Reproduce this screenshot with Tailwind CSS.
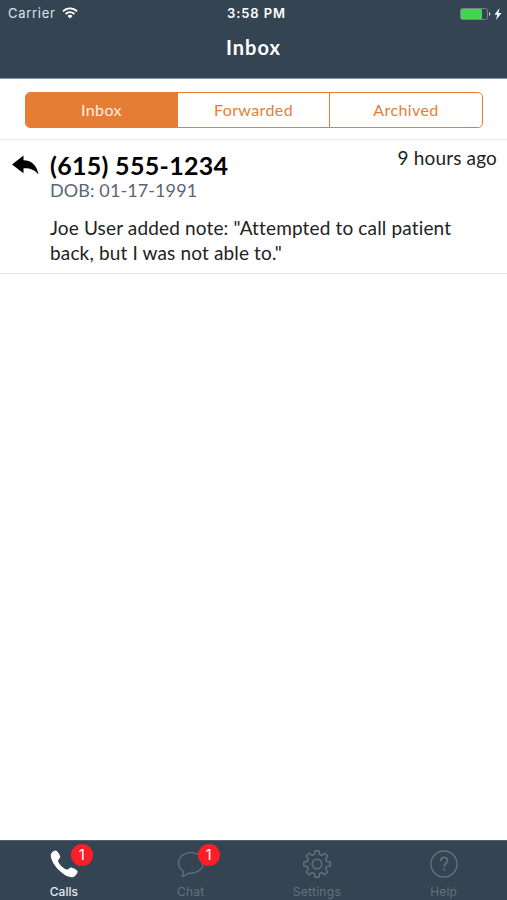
<!DOCTYPE html>
<html lang="en">
<head>
    <meta charset="UTF-8">
    <meta name="viewport" content="width=device-width, initial-scale=1.0">
    <title>Inbox</title>
    <script src="https://cdn.jsdelivr.net/npm/@tailwindcss/browser@4"></script>
</head>
<body class="bg-white font-['Lato',sans-serif]">
    <div class="flex flex-col h-[900px] w-[507px] overflow-hidden">

        <!-- Status bar and title -->
        <header class="h-[79px] shrink-0 bg-[#354453] border-b border-[#8296ab] text-white">
            <div class="grid grid-cols-3 items-center h-7 pl-2 pr-[5px] font-['Inter',sans-serif] text-[13px]">
                <div class="flex items-center gap-1.5 text-[#dde5ec]">
                    <span class="tracking-[0.7px]">Carrier</span>
                    <svg class="w-4 h-3 -mt-0.5" viewBox="0 0 16 12" fill="none" stroke="#fff" stroke-width="1.8">
                        <path d="M1 4.3a10 10 0 0 1 14 0M3.6 7a6.3 6.3 0 0 1 8.8 0"/>
                        <path d="M8 11.5 5.5 9a3.6 3.6 0 0 1 5 0z" fill="#fff" stroke="none"/>
                    </svg>
                </div>
                <div class="pl-[3px] text-center font-semibold tracking-[0.9px]">3:58 PM</div>
                <div class="flex items-center justify-end gap-[3px]">
                    <svg class="w-[31px] h-3" viewBox="0 0 31 12">
                        <rect x=".5" y=".5" width="27" height="11" rx="2" fill="none" stroke="#77838c"/>
                        <rect x="1" y="1" width="21" height="10" rx="1" fill="#43d551"/>
                        <path d="M29 4a2.2 2.2 0 0 1 0 4z" fill="#cbd3da"/>
                    </svg>
                    <svg class="w-[8px] h-[12px]" viewBox="0 0 8 12" fill="#fff"><path d="M5.5 0 .5 6.7h2.8L2 12l5.500-7H4.400z"/></svg>
                </div>
            </div>
            <h1 class="-mt-px text-center text-xl leading-10 font-bold tracking-[1px]">Inbox</h1>
        </header>

        <!-- Segmented control -->
        <div class="h-[61px] shrink-0 border-b border-[#e6e9eb] px-[25px] pt-[13px]">
            <div class="grid grid-cols-3 h-9 w-[458px] border-[1.5px] border-[#e67d35] rounded-[5px] overflow-hidden divide-x divide-[#e67d35] text-center text-base leading-[34px] tracking-[0.4px] text-[#e67d35]">
                <button class="bg-[#e67d35] text-[#fff0e4]">Inbox</button>
                <button>Forwarded</button>
                <button>Archived</button>
            </div>
        </div>

        <!-- Call list -->
        <main class="flex-1">
            <div class="flex h-[134px] border-b border-[#e4e4e4] pl-3 pr-[10px]">
                <svg class="w-[27px] h-5 mt-[15px] shrink-0" viewBox="0 0 27 20">
                    <path d="M0 9.5 11.5.5v4.8C20 5.5 25 11 26.5 19.5 22.5 14.5 18 13 11.5 13.2v5z"/>
                </svg>
                <div class="flex-1 pl-[11px] pt-[11px]">
                    <div class="flex justify-between h-7">
                        <h2 class="text-[25px] leading-7 font-bold tracking-[0.3px] whitespace-nowrap">(615) 555-1234</h2>
                        <span class="-mt-[5px] text-[19px] leading-6 tracking-[0.15px] text-[#222]">9 hours ago</span>
                    </div>
                    <p class="-mt-px text-lg leading-6 tracking-[0.1px] text-[#5b6675]">DOB: 01-17-1991</p>
                    <p class="mt-[13px] text-[19px] leading-[25px] tracking-[0.15px] whitespace-nowrap text-[#222]">Joe User added note: "Attempted to call patient<br>back, but I was not able to."</p>
                </div>
            </div>
        </main>

        <!-- Tab bar -->
        <nav class="grid grid-cols-4 h-[60px] shrink-0 bg-[#354453] border-t border-[#53606b] font-['Inter',sans-serif] text-xs text-[#66727c]">
            <a class="flex flex-col items-center pt-2 pl-px text-white">
                <div class="relative">
                    <svg class="w-[30px] h-[30px]" viewBox="0 0 30 30" fill="currentColor">
                        <path d="M1.800 5.500C2.200 3.500 4.800 1.500 6.800 1.500c1.500 0 4 4.300 4.400 6 .3 1.600-2.300 2.800-2.100 4.400.5 3 5.900 8.300 8.900 8.600 1.600.1 2.600-2.200 4.200-2.100 1.800.2 6.200 2.600 6.400 4.100.2 2-2.800 5.400-5 5.700C15.500 29 1 14.500 1.800 5.500z"/>
                    </svg>
                    <span class="absolute left-[22px] -top-[5px] w-[22px] h-[22px] rounded-full bg-[#fb2028] text-center text-[15px] leading-[22px]">1</span>
                </div>
                <span class="mt-[5px] leading-4 font-medium text-[#e3eaf0]">Calls</span>
            </a>
            <a class="flex flex-col items-center pt-2 pl-px">
                <div class="relative">
                    <svg class="w-[30px] h-[30px]" viewBox="0 0 30 30" fill="none" stroke="currentColor" stroke-width="1.2">
                        <path d="M15 3.500C8.200 3.500 2.500 8.200 2.500 14c0 3.700 2.100 6.600 5.200 8.400 0 2-.6 3.500-1.700 4.900 2.600-.4 4.700-1.600 6.300-3.100 8.200.8 15-3.800 15-10.200C27.300 8.200 21.800 3.500 15 3.500z"/>
                    </svg>
                    <span class="absolute left-[22px] -top-[5px] w-[22px] h-[22px] rounded-full bg-[#fb2028] text-center text-[15px] leading-[22px] text-white">1</span>
                </div>
                <span class="mt-[5px] leading-4 tracking-[0.2px]">Chat</span>
            </a>
            <a class="flex flex-col items-center pt-2">
                <svg class="w-[30px] h-[30px]" viewBox="-15 -15 30 30" fill="none" stroke="currentColor" stroke-width="1.4" stroke-linejoin="round">
                    <path d="M9.600-2.600 13.200-2V2L9.600 2.600 8.600 4.950 10.750 7.900 7.900 10.750 4.950 8.600 2.600 9.600 2 13.200H-2L-2.600 9.600-4.950 8.600-7.900 10.750-10.750 7.900-8.600 4.950-9.600 2.600-13.200 2V-2L-9.600-2.600-8.600-4.950-10.750-7.900-7.900-10.750-4.950-8.600-2.600-9.600-2-13.200H2L2.600-9.600 4.950-8.600 7.900-10.750 10.750-7.900 8.600-4.950z"/>
                    <circle r="4.800"/>
                </svg>
                <span class="mt-[5px] leading-4 tracking-[0.3px]">Settings</span>
            </a>
            <a class="flex flex-col items-center pt-2">
                <svg class="w-[30px] h-[30px]" viewBox="0 0 30 30" fill="none" stroke="currentColor" stroke-width="1.3">
                    <circle cx="15" cy="15" r="13"/>
                    <path d="M11.800 12c0-4.800 6.700-4.600 6.700-.6 0 2.500-3.300 2.900-3.300 6.200M15.200 19.500v2" stroke-width="1.700"/>
                </svg>
                <span class="mt-[5px] leading-4 tracking-[0.2px]">Help</span>
            </a>
        </nav>
    </div>
</body>
</html>
